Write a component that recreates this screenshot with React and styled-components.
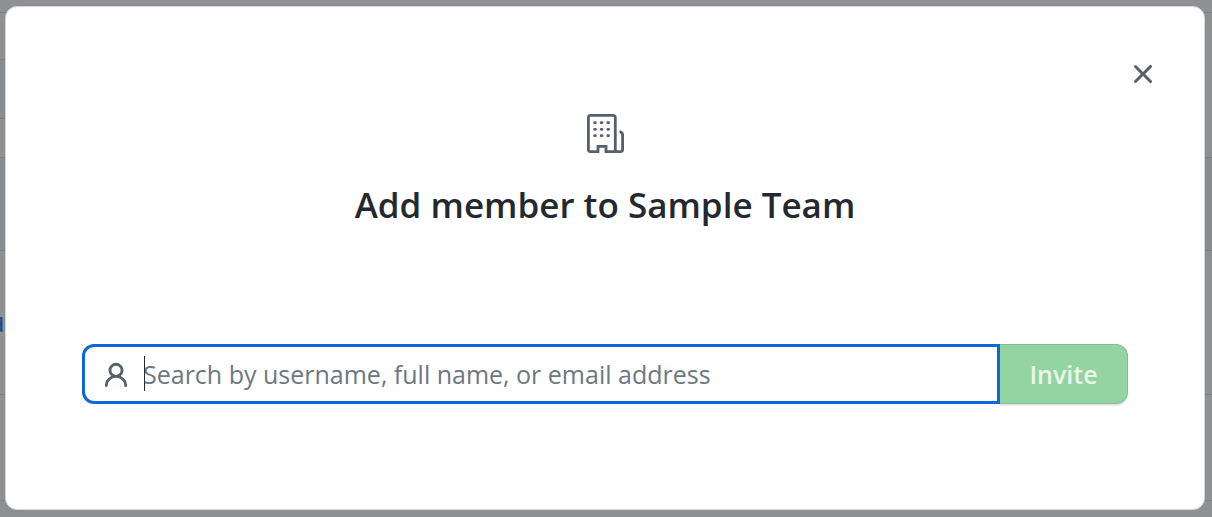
import React from 'react';
import styled, { createGlobalStyle } from 'styled-components';

const GlobalStyle = createGlobalStyle`
  * {
    box-sizing: border-box;
  }
  body {
    margin: 0;
    background-color: #8f9091;
    color: #24292f;
    font-family: "Segoe UI", "Open Sans", "Noto Sans", sans-serif;
  }
`;

const Page = styled.div`
  position: relative;
  min-height: 100vh;
  overflow: hidden;
`;

const Backdrop = styled.div`
  position: absolute;
  inset: 0;
  display: grid;
  grid-template-columns: 1fr 1fr;
  align-items: start;
`;

const Row = styled.div`
  height: ${props => props.$height}px;
  padding-top: ${props => props.$top || 0}px;
  background-color: ${props => (props.$shaded ? '#888c8f' : 'transparent')};
  border-bottom: 1px solid #7b7f86;
`;

const RowLink = styled.a`
  display: flex;
  justify-content: flex-end;
  width: 4px;
  overflow: hidden;
  color: #1b4b91;
  font-size: 20px;
  font-weight: 600;
  line-height: 24px;
  text-decoration: none;
`;

const Dialog = styled.section`
  position: relative;
  margin: 6px 7px 7px 5px;
  padding: 106px 76px 105px;
  background-color: #fff;
  border: 1px solid #d0d7de;
  border-radius: 12px;
`;

const CloseButton = styled.button`
  position: absolute;
  top: 51px;
  right: 45px;
  display: flex;
  padding: 0;
  border: 0;
  background: none;
  color: #57606a;
`;

const Header = styled.header`
  display: flex;
  flex-direction: column;
  align-items: center;
  color: #57606a;
`;

const Title = styled.h1`
  margin: 26px 0 114px;
  color: #24292f;
  font-size: 35px;
  font-weight: 600;
  line-height: 50px;
`;

const Form = styled.form`
  display: flex;
  height: 60px;
`;

const Field = styled.label`
  position: relative;
  flex: 1;
  display: flex;
  align-items: center;
  padding-left: 18px;
  border: 3px solid #0969da;
  border-radius: 12px 0 0 12px;
  color: #57606a;
`;

const Input = styled.input`
  flex: 1;
  min-width: 0;
  margin-left: 14px;
  padding: 0;
  border: 0;
  outline: 0;
  background: none;
  color: #24292f;
  font-family: inherit;
  font-size: 25px;
  line-height: 36px;
  &::placeholder {
    color: #6e7781;
    opacity: 1;
  }
`;

const Caret = styled.span`
  position: absolute;
  top: 9px;
  left: 59px;
  width: 1px;
  height: 35px;
  background-color: #24292f;
`;

const InviteButton = styled.button`
  width: 128px;
  padding: 0;
  border: 1px solid #84bc92;
  border-left: 0;
  border-radius: 0 12px 12px 0;
  background-color: #94d3a2;
  box-shadow: 0 2px 0 rgba(27, 31, 36, 0.1);
  color: #eaf6ec;
  font-family: inherit;
  font-size: 25px;
  font-weight: 600;
`;

const CloseIcon = () => (
  <svg width="32" height="32" viewBox="0 0 16 16" fill="currentColor" aria-hidden="true">
    <path d="M3.72 3.72a.75.75 0 0 1 1.06 0L8 6.94l3.22-3.22a.75.75 0 1 1 1.06 1.06L9.06 8l3.22 3.22a.75.75 0 1 1-1.06 1.06L8 9.06l-3.22 3.22a.75.75 0 0 1-1.06-1.06L6.94 8 3.72 4.78a.75.75 0 0 1 0-1.06Z" />
  </svg>
);

const PersonIcon = () => (
  <svg width="26" height="26" viewBox="1 0 14 14" fill="currentColor" aria-hidden="true">
    <path d="M10.561 8.073a6.005 6.005 0 0 1 3.432 5.142.75.75 0 1 1-1.498.07 4.5 4.5 0 0 0-8.99 0 .75.75 0 0 1-1.498-.07 6.004 6.004 0 0 1 3.431-5.142 3.999 3.999 0 1 1 5.123 0ZM10.5 5a2.5 2.5 0 1 0-5 0 2.5 2.5 0 0 0 5 0Z" />
  </svg>
);

const BuildingIcon = () => (
  <svg
    width="39"
    height="41"
    viewBox="0 0 39 41"
    fill="none"
    stroke="currentColor"
    strokeWidth="2.8"
    strokeLinecap="round"
    aria-hidden="true"
  >
    <path d="M29.3 38.6V4.4a2 2 0 0 0-2-2H4.4a2 2 0 0 0-2 2v32.2a2 2 0 0 0 2 2H12v-5.2h8v5.2h14.6a2 2 0 0 0 2-2V21.5c0-.7-.3-1.3-.8-1.7l-1.2-.9" />
    {[9.7, 16.3, 22.7].map(y => (
      <path key={y} d={`M8.6 ${y}h.8M15.2 ${y}h.8M21.8 ${y}h.8`} />
    ))}
  </svg>
);

export default () => (
  <Page>
    <GlobalStyle />
    <Backdrop>
      <div>
        <Row $height={13} />
        <Row $height={47} />
        <Row $height={59} $shaded />
        <Row $height={39} />
        <Row $height={93} $shaded />
        <Row $height={144} $top={62}>
          <RowLink href="#member">d</RowLink>
        </Row>
        <Row $height={106} />
      </div>
      <div>
        <Row $height={13} />
        <Row $height={145} />
        <Row $height={93} $shaded />
        <Row $height={144} />
        <Row $height={106} />
      </div>
    </Backdrop>
    <Dialog role="dialog" aria-labelledby="dialog-title">
      <CloseButton type="button" aria-label="Close">
        <CloseIcon />
      </CloseButton>
      <Header>
        <BuildingIcon />
        <Title id="dialog-title">Add member to Sample Team</Title>
      </Header>
      <Form>
        <Field>
          <PersonIcon />
          <Input
            type="text"
            aria-label="Search by username, full name, or email address"
            placeholder="Search by username, full name, or email address"
          />
          <Caret />
        </Field>
        <InviteButton type="button" disabled>Invite</InviteButton>
      </Form>
    </Dialog>
  </Page>
);
